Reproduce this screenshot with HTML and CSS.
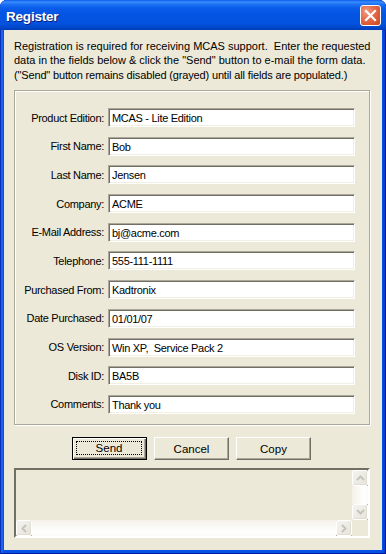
FILE: index.html
```html
<!DOCTYPE html>
<html>
<head>
<meta charset="utf-8">
<link rel="stylesheet" href="styles.css">
</head>
<body>
<div class="window">
  <div class="titlebar">
    <span class="title">Register</span>
    <div class="close">
      <svg width="13" height="13" viewBox="0 0 13 13"><path d="M2 2 L11 11 M11 2 L2 11" stroke="#fff" stroke-width="2.2" stroke-linecap="square"/></svg>
    </div>
  </div>
  <div class="content">
    <p class="intro">Registration is required for receiving MCAS support.&nbsp; Enter the requested data in the fields below &amp; click the "Send" button to e-mail the form data.</p>
    <p class="intro note">("Send" button remains disabled (grayed) until all fields are populated.)</p>
    <div class="group">
      <label>Product Edition:</label><div class="field">MCAS - Lite Edition</div>
      <label>First Name:</label><div class="field">Bob</div>
      <label>Last Name:</label><div class="field">Jensen</div>
      <label>Company:</label><div class="field">ACME</div>
      <label>E-Mail Address:</label><div class="field">bj@acme.com</div>
      <label>Telephone:</label><div class="field">555-111-1111</div>
      <label>Purchased From:</label><div class="field">Kadtronix</div>
      <label>Date Purchased:</label><div class="field">01/01/07</div>
      <label>OS Version:</label><div class="field">Win XP,&nbsp; Service Pack 2</div>
      <label>Disk ID:</label><div class="field">BA5B</div>
      <label>Comments:</label><div class="field">Thank you</div>
    </div>
    <div class="buttons">
      <div class="btn default"><span class="focus">Send</span></div>
      <div class="btn">Cancel</div>
      <div class="btn">Copy</div>
    </div>
    <div class="memo">
      <div class="memo-body"></div>
      <div class="vscroll">
        <div class="sbtn"><svg width="9" height="6" viewBox="0 0 9 6"><path d="M1 5 L4.5 1.5 L8 5" fill="none" stroke="#c4c6bc" stroke-width="2"/></svg></div>
        <div class="vtrack"></div>
        <div class="sbtn"><svg width="9" height="6" viewBox="0 0 9 6"><path d="M1 1 L4.5 4.5 L8 1" fill="none" stroke="#c4c6bc" stroke-width="2"/></svg></div>
      </div>
      <div class="hscroll">
        <div class="sbtn"><svg width="6" height="9" viewBox="0 0 6 9"><path d="M5 1 L1.5 4.5 L5 8" fill="none" stroke="#c4c6bc" stroke-width="2"/></svg></div>
        <div class="htrack"></div>
        <div class="sbtn"><svg width="6" height="9" viewBox="0 0 6 9"><path d="M1 1 L4.5 4.5 L1 8" fill="none" stroke="#c4c6bc" stroke-width="2"/></svg></div>
      </div>
      <div class="corner"></div>
    </div>
  </div>
</div>
</body>
</html>
```
FILE: styles.css
```css
html, body {
  margin: 0;
  padding: 0;
  background: #ffffff;
}

.window {
  width: 386px;
  height: 554px;
  box-sizing: border-box;
  padding: 0 4px 4px 4px;
  background: #0750e6;
  border-radius: 7px 7px 0 0;
  box-shadow: inset 1px 0 #0831b8, inset -1px 0 #001a9c, inset 0 -1px #001a9c, inset 3px 0 #1863f0, inset -3px 0 #0a3fd0;
  display: flex;
  flex-direction: column;
  font-family: "Liberation Sans", Arial, sans-serif;
}

.titlebar {
  height: 30px;
  margin: 0 -4px;
  border-radius: 7px 7px 0 0;
  background: linear-gradient(to bottom, #0a5dee 0px, #3a8cfb 2px, #1f74f6 4px, #0a5ce9 8px, #0455e4 14px, #0453e1 20px, #0352dd 24px, #0245c6 28px, #003cb6 30px);
  display: flex;
  align-items: center;
  justify-content: space-between;
  padding: 0 5px 0 6px;
  box-sizing: border-box;
}

.title {
  color: #fff;
  font-family: "Liberation Sans", Arial, sans-serif;
  font-weight: bold;
  font-size: 13.5px;
  letter-spacing: -0.2px;
  text-shadow: 1px 1px #0a1e7a;
  margin-top: 2px;
}

.close {
  width: 21px;
  height: 21px;
  box-sizing: border-box;
  border: 1px solid #ffffff;
  border-radius: 3px;
  background: radial-gradient(circle at 30% 30%, #f09a80 0%, #e5694a 45%, #cc4418 100%);
  display: flex;
  align-items: center;
  justify-content: center;
  margin-top: 1px;
}

.content {
  flex: 1;
  background: #ece9d8;
  padding: 9px 10px 0 10px;
  font-size: 11px;
  color: #000;
}

.intro {
  margin: 0;
  line-height: 14px;
}

.note {
  margin-top: 1px;
  letter-spacing: -0.15px;
}

.group {
  margin-top: 8px;
  width: 356px;
  height: 335px;
  box-sizing: border-box;
  border: 1px solid #aca899;
  box-shadow: inset 1px 1px #ffffff, 1px 1px #ffffff;
  padding: 17px 14px 0 0;
  display: grid;
  grid-template-columns: 89px 247px;
  column-gap: 4px;
  grid-auto-rows: 19px;
  row-gap: 9.7px;
}

.group label {
  text-align: right;
  align-self: center;
  white-space: nowrap;
  letter-spacing: -0.3px;
}

.field {
  box-sizing: border-box;
  height: 19px;
  background: #fff;
  border-top: 1px solid #aca899;
  border-left: 1px solid #aca899;
  border-right: 1px solid #ffffff;
  border-bottom: 1px solid #ffffff;
  box-shadow: inset 1px 1px #716f64, inset -1px -1px #f1efe2;
  padding: 2px 3px 0 3px;
  line-height: 14px;
  white-space: nowrap;
  overflow: hidden;
  letter-spacing: -0.3px;
}

.buttons {
  display: flex;
  gap: 7px;
  padding-left: 58px;
  margin-top: 12px;
}

.btn {
  width: 75px;
  height: 23px;
  box-sizing: border-box;
  background: #ece9d8;
  border-top: 1px solid #ffffff;
  border-left: 1px solid #ffffff;
  border-right: 1px solid #716f64;
  border-bottom: 1px solid #716f64;
  box-shadow: inset -1px -1px #aca899;
  display: flex;
  align-items: center;
  justify-content: center;
  font-size: 11.5px;
}

.btn.default {
  border: 1px solid #000;
  box-shadow: inset 1px 1px #fff, inset -1px -1px #716f64, inset -2px -2px #aca899;
  padding: 3px 4px 4px 3px;
}

.focus {
  flex: 1;
  align-self: stretch;
  border: 1px dotted #000;
  display: flex;
  align-items: center;
  justify-content: center;
}

.memo {
  margin-top: 8px;
  width: 356px;
  height: 70px;
  box-sizing: border-box;
  border-top: 2px solid #716f64;
  border-left: 2px solid #716f64;
  border-right: 2px solid #ffffff;
  border-bottom: 2px solid #ffffff;
  box-shadow: -1px -1px #aca899 inset;
  display: grid;
  grid-template-columns: 1fr 16px;
  grid-template-rows: 1fr 16px;
  background: #ece9d8;
}

.memo-body {
  grid-column: 1;
  grid-row: 1;
}

.vscroll {
  grid-column: 2;
  grid-row: 1;
  display: flex;
  flex-direction: column;
}

.hscroll {
  grid-column: 1;
  grid-row: 2;
  display: flex;
}

.corner {
  grid-column: 2;
  grid-row: 2;
  background: #ece9d8;
}

.sbtn {
  width: 16px;
  height: 16px;
  flex: none;
  box-sizing: border-box;
  border: 1px solid #ffffff;
  border-radius: 2px;
  background: linear-gradient(135deg, #f4f3ee, #e6e4da);
  box-shadow: inset -1px -1px #e0ded3;
  display: flex;
  align-items: center;
  justify-content: center;
}

.vtrack {
  flex: 1;
  background: linear-gradient(to right, #f3f1e8, #fefefe 70%, #fbfbf8);
}

.htrack {
  flex: 1;
  background: linear-gradient(to bottom, #f3f1e8, #fefefe 70%, #fbfbf8);
}
```
